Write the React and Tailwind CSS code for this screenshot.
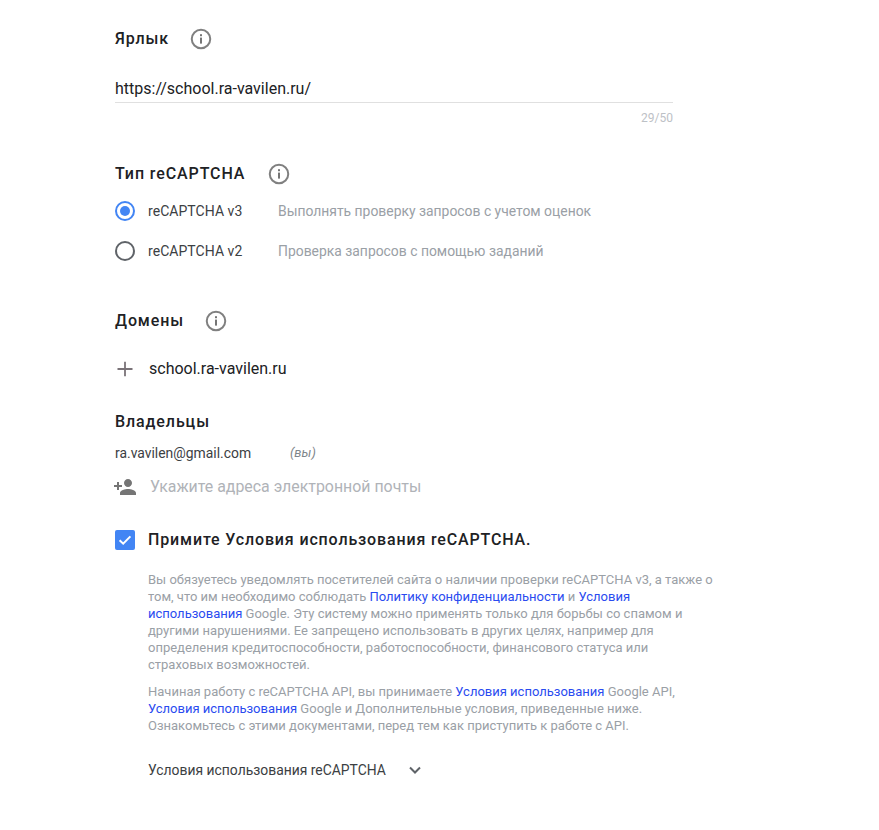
import React from "react";

const roboto = "font-['Roboto',sans-serif]";

function Info() {
  return (
    <svg width="22" height="22" viewBox="0 0 22 22" className="shrink-0" fill="none">
      <circle cx="11" cy="11" r="9.25" stroke="#808080" strokeWidth="2" />
      <rect x="10" y="9.6" width="2" height="6" fill="#757575" />
      <rect x="10" y="6.2" width="2" height="2" fill="#757575" />
    </svg>
  );
}

function Heading({ children, gap, cls = "" }) {
  return (
    <div className={`flex items-center ${gap} ${cls}`}>
      <h2 className="text-base leading-5 font-medium tracking-[0.9px] text-[#202124]">{children}</h2>
      <Info />
    </div>
  );
}

function Link({ children }) {
  return <a className="text-[#2a4bf0]">{children}</a>;
}

function Radio({ on }) {
  return (
    <span className={`w-5 h-5 rounded-full border-2 flex items-center justify-center shrink-0 ${on ? "border-[#4285f4]" : "border-[#5f6368]"}`}>
      {on && <span className="w-[10px] h-[10px] rounded-full bg-[#4285f4]" />}
    </span>
  );
}

function RadioRow({ on, label, hint, cls = "" }) {
  return (
    <div className={`flex items-center h-5 ${cls}`}>
      <Radio on={on} />
      <span className="ml-[13px] w-[130px] text-[14px] tracking-[0.05px] text-[#3c4043]">{label}</span>
      <span className="text-[13.9px] text-[#9aa0a6]">{hint}</span>
    </div>
  );
}

export default function App() {
  return (
    <div className={`${roboto} w-[879px] h-[830px] bg-white overflow-hidden pl-[115px] pt-[28px]`}>
      <Heading gap="gap-[21px]">Ярлык</Heading>

      <div className="w-[558px] mt-[27px] h-[26px] border-b border-[#e0e0e0] text-base leading-[24px] text-[#202124]">
        https://school.ra-vavilen.ru/
      </div>
      <div className="w-[558px] mt-[7px] text-right text-xs leading-4 text-[#bdc1c6]">29/50</div>

      <Heading gap="gap-[23px]" cls="mt-[37px]">Тип reCAPTCHA</Heading>
      <RadioRow cls="mt-[16px]" on label="reCAPTCHA v3" hint="Выполнять проверку запросов с учетом оценок" />
      <RadioRow cls="mt-[20px]" label="reCAPTCHA v2" hint="Проверка запросов с помощью заданий" />

      <Heading gap="gap-[21px]" cls="mt-[49px]">Домены</Heading>

      <div className="flex items-center mt-[25px] h-6">
        <svg width="20" height="20" viewBox="0 0 20 20" className="shrink-0">
          <path d="M2.5 10h15M10 2.8v14.4" stroke="#7a7378" strokeWidth="1.8" fill="none" />
        </svg>
        <span className="ml-[14px] text-base text-[#202124]">school.ra-vavilen.ru</span>
      </div>

      <h2 className="mt-[31px] text-base leading-5 font-medium tracking-[0.9px] text-[#202124]">Владельцы</h2>

      <div className="flex items-center mt-[11px] h-5 text-[13.9px]">
        <span className="w-[175px] text-[#3c4043]">ra.vavilen@gmail.com</span>
        <span className="italic text-[#80868b] text-[13px]">(вы)</span>
      </div>

      <div className="flex items-center mt-[12px] h-6">
        <svg width="24" height="24" viewBox="0 0 24 24" className="shrink-0 -ml-[2px]" fill="#757575">
          <path d="M15 12c2.2 0 4-1.8 4-4s-1.8-4-4-4-4 1.8-4 4 1.8 4 4 4zm-9-2V7H4v3H1v2h3v3h2v-3h3v-2H6zm9 4c-2.7 0-8 1.3-8 4v2h16v-2c0-2.7-5.3-4-8-4z" />
        </svg>
        <span className="ml-[13px] text-[15.9px] text-[#b0b3b8]">Укажите адреса электронной почты</span>
      </div>

      <div className="flex items-center mt-[31px] h-5">
        <span className="w-5 h-5 rounded-[2px] bg-[#4285f4] flex items-center justify-center shrink-0">
          <svg width="16" height="16" viewBox="0 0 16 16" fill="none">
            <path d="M2.6 8.2l3.6 3.5 7.2-7.3" stroke="#fff" strokeWidth="2" />
          </svg>
        </span>
        <span className="ml-[13px] text-base leading-5 font-medium tracking-[0.85px] text-[#202124]">Примите Условия использования reCAPTCHA.</span>
      </div>

      <div className="ml-[33px] mt-[21px] w-[580px] text-[13px] leading-[17px] text-[#9aa0a6]">
        <p>
          Вы обязуетесь уведомлять посетителей сайта о наличии проверки reCAPTCHA v3, а также о<br />
          том, что им необходимо соблюдать <Link>Политику конфиденциальности</Link> и <Link>Условия</Link><br />
          <Link>использования</Link> Google. Эту систему можно применять только для борьбы со спамом и<br />
          другими нарушениями. Ее запрещено использовать в других целях, например для<br />
          определения кредитоспособности, работоспособности, финансового статуса или<br />
          страховых возможностей.
        </p>
        <p className="mt-[10px]">
          Начиная работу с reCAPTCHA API, вы принимаете <Link>Условия использования</Link> Google API,<br />
          <Link>Условия использования</Link> Google и Дополнительные условия, приведенные ниже.<br />
          Ознакомьтесь с этими документами, перед тем как приступить к работе с API.
        </p>
      </div>

      <div className="ml-[33px] mt-[24px] flex items-center h-6">
        <span className="text-[13.9px] text-[#3c4043]">Условия использования reCAPTCHA</span>
        <svg width="24" height="24" viewBox="0 0 24 24" className="ml-[17px]" fill="none">
          <path d="M7 9.5l5 5 5-5" stroke="#5f6368" strokeWidth="2" />
        </svg>
      </div>
    </div>
  );
}
